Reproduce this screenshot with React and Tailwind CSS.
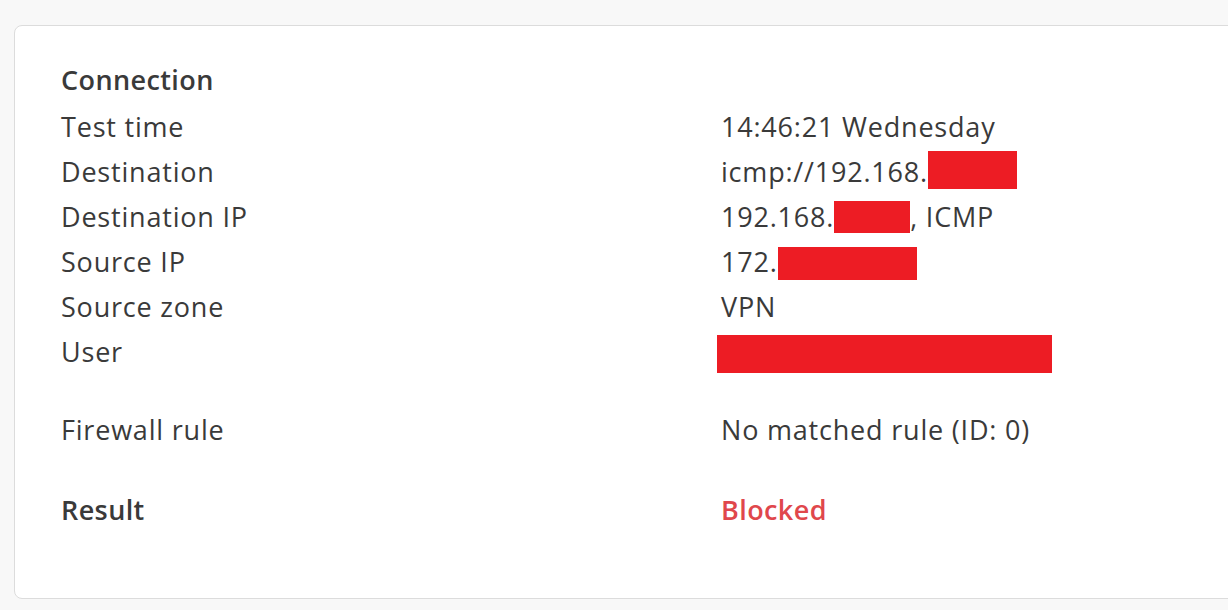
export default function App() {
  const rows = [
    ["Test time", <span>14:46:21 Wednesday</span>],
    [
      "Destination",
      <span>
        icmp://192.168.
        <span className="inline-block w-[89px] h-[38px] bg-[#ed1c24] align-[-7px]" />
      </span>,
    ],
    [
      "Destination IP",
      <span>
        192.168.
        <span className="inline-block w-[76px] h-[32px] bg-[#ed1c24] align-[-6px]" />
        , ICMP
      </span>,
    ],
    [
      "Source IP",
      <span>
        172.
        <span className="inline-block w-[139px] h-[33px] bg-[#ed1c24] align-[-8px]" />
      </span>,
    ],
    ["Source zone", <span>VPN</span>],
    [
      "User",
      <span className="inline-block w-[335px] h-[38px] bg-[#ed1c24] ml-[-4px] align-[-11px]" />,
    ],
  ];
  return (
    <div
      className="w-[1228px] h-[610px] overflow-hidden bg-[#f8f8f8] pt-[25px] pl-[14px] text-[#3a3a3a]"
      style={{ fontFamily: "'Open Sans', 'Liberation Sans', sans-serif" }}
    >
      <div className="w-[1240px] h-[574px] bg-white border border-[#dcdcdc] rounded-lg pl-[46px] pt-[31px] text-[27px] tracking-[0.8px] leading-[45px]">
        <div className="font-semibold h-[45px] mb-[2px] tracking-[0.4px]">Connection</div>
        {rows.map(([label, value], i) => (
          <div key={i} className="flex h-[45px]">
            <div className="w-[660px] shrink-0">{label}</div>
            <div>{value}</div>
          </div>
        ))}
        <div className="flex h-[45px] mt-[33px]">
          <div className="w-[660px] shrink-0">Firewall rule</div>
          <div>No matched rule (ID: 0)</div>
        </div>
        <div className="flex h-[45px] mt-[35px] font-semibold tracking-[0.4px]">
          <div className="w-[660px] shrink-0">Result</div>
          <div className="text-[#e0474c]">Blocked</div>
        </div>
      </div>
    </div>
  );
}
